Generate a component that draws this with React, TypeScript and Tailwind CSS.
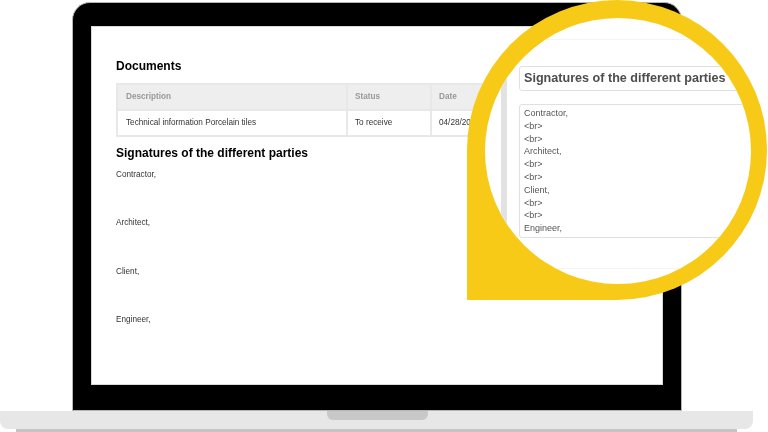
const sans = "font-['Liberation_Sans',Arial,sans-serif]";

function Laptop() {
  return (
    <div className="flex flex-col items-start pt-[2px]">
      <div className="ml-[72px] h-[409px] w-[610px] rounded-t-[18px] border border-[#b5b5b5] bg-black pl-[18px] pr-[19px] pt-[23px]">
        <div className="h-[359px] w-[572px] border border-[#d8d8d8] bg-white pl-[24px] pt-[31px]">
          <div className="blur-[0.35px]">
            <h2 className="text-[12px] font-bold leading-[16px] text-black">Documents</h2>
            <table className="mt-[9px] w-[470px] table-fixed border-collapse text-[8.2px] leading-[10px]">
              <colgroup>
                <col className="w-[230px]" />
                <col className="w-[84px]" />
                <col />
              </colgroup>
              <thead>
                <tr className="h-[26px] bg-[#eeeeee] text-left font-bold text-[#999]">
                  <th className="border-2 border-[#e8e8e8] pl-[8px]">Description</th>
                  <th className="border-2 border-[#e8e8e8] pl-[7px]">Status</th>
                  <th className="border-2 border-[#e8e8e8] pl-[7px]">Date</th>
                </tr>
              </thead>
              <tbody>
                <tr className="h-[26px] text-[#333]">
                  <td className="border-2 border-[#e8e8e8] pl-[8px]">Technical information Porcelain tiles</td>
                  <td className="border-2 border-[#e8e8e8] pl-[7px]">To receive</td>
                  <td className="border-2 border-[#e8e8e8] pl-[7px]">04/28/2021</td>
                </tr>
              </tbody>
            </table>
            <h2 className="mt-[8px] text-[12px] font-bold leading-[16px] text-black">Signatures of the different parties</h2>
            <div className="mt-[9px] flex flex-col gap-[38.3px] text-[8.2px] leading-[10px] text-[#333]">
              <p>Contractor,</p>
              <p>Architect,</p>
              <p>Client,</p>
              <p>Engineer,</p>
            </div>
          </div>
        </div>
      </div>
      <div className="flex h-[18px] w-[753px] justify-center rounded-b-[8px] bg-[#e7e7e7] pl-[2px]">
        <div className="h-[9px] w-[101px] rounded-b-[6px] bg-[#c8c8c8]" />
      </div>
      <div className="ml-[16px] h-[3px] w-[721px] bg-[#c4c4c4]" />
    </div>
  );
}

function Magnifier() {
  return (
    <div className="absolute left-[467px] top-0 h-[300px] w-[300px] rounded-full rounded-bl-none bg-[#f7ca18] p-[18px]">
      <div className="h-[266px] w-[266px] overflow-hidden rounded-full bg-white">
        <div className="flex h-full">
          <div className="ml-[16px] w-[6px] shrink-0 bg-[#e2e2e2]" />
          <div className="mt-[21px] mb-[15px] min-w-0 flex-1 border-y border-[#f4f4f4] pl-[12px] pt-[26px]">
            <div className="blur-[0.3px]">
              <div className="flex h-[25px] w-[300px] items-center rounded-[3px] border border-[#e0e0e0] pl-[4px] text-[12.6px] font-bold text-[#4d4d4d]">
                <span className="whitespace-nowrap">Signatures of the different parties</span>
              </div>
              <div className="mt-[13px] h-[134px] w-[300px] rounded-[3px] border border-[#e0e0e0] pl-[4px] pt-[2px] text-[9px] leading-[12.8px] text-[#555]">
                <p>Contractor,</p>
                <p>&lt;br&gt;</p>
                <p>&lt;br&gt;</p>
                <p>Architect,</p>
                <p>&lt;br&gt;</p>
                <p>&lt;br&gt;</p>
                <p>Client,</p>
                <p>&lt;br&gt;</p>
                <p>&lt;br&gt;</p>
                <p>Engineer,</p>
              </div>
            </div>
          </div>
        </div>
      </div>
    </div>
  );
}

export default function App() {
  return (
    <div className={`relative h-[432px] w-[768px] overflow-hidden bg-white ${sans}`}>
      <Laptop />
      <Magnifier />
    </div>
  );
}
